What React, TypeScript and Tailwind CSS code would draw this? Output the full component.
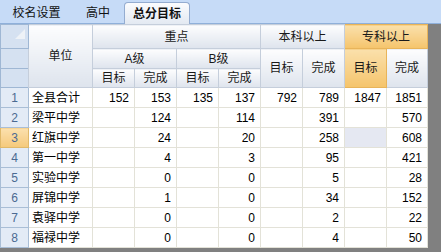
import React from 'react';

type Row = [string, string, string, string, string, string, string, string, string];

const rows: Row[] = [
  ['全县合计', '152', '153', '135', '137', '792', '789', '1847', '1851'],
  ['梁平中学', '', '124', '', '114', '', '391', '', '570'],
  ['红旗中学', '', '24', '', '20', '', '258', '', '608'],
  ['第一中学', '', '4', '', '3', '', '95', '', '421'],
  ['实验中学', '', '0', '', '0', '', '5', '', '28'],
  ['屏锦中学', '', '1', '', '0', '', '34', '', '152'],
  ['袁驿中学', '', '0', '', '0', '', '2', '', '22'],
  ['福禄中学', '', '0', '', '0', '', '4', '', '50'],
];

const font = { fontFamily: '"Liberation Sans", "Noto Sans CJK SC", sans-serif' };

const hd =
  'border border-[#c5cedb] bg-gradient-to-b from-[#fdfdfe] to-[#dee4ed] text-center font-normal text-[12px] text-[#1a1a1a] p-0';
const hdOrange =
  'border border-[#e8b45a] bg-gradient-to-b from-[#fae0ab] to-[#f5c46b] text-center font-normal text-[12px] text-[#1a1a1a] p-0';
const corner = 'border border-[#9fb7d4] bg-[#d5e1f1] p-0';

const App = () => {
  return (
    <div className="w-[441px] h-[252px] overflow-hidden flex flex-col bg-[#808080]" style={font}>
      {/* tab strip */}
      <div className="h-[24px] shrink-0 bg-[#c6dbf7] border-b border-[#8fb0da] flex items-end text-[12px] text-[#111]">
        <div className="w-[72px] h-[21px] flex items-center justify-center pl-[1px]">校名设置</div>
        <div className="w-[52px] h-[21px] flex items-center justify-center">高中</div>
        <div className="w-[66px] h-[22px] -mb-px flex items-center justify-center font-bold rounded-t-[4px] border border-b-0 border-[#94acd0] bg-gradient-to-b from-[#fbfcfe] to-[#e3e9f2]">
          总分目标
        </div>
      </div>

      <table className="table-fixed border-collapse w-[427px] bg-white text-[12px]">
        <colgroup>
          <col className="w-[28px]" />
          <col className="w-[64px]" />
          <col className="w-[42px]" />
          <col className="w-[42px]" />
          <col className="w-[42px]" />
          <col className="w-[42px]" />
          <col className="w-[42px]" />
          <col className="w-[42px]" />
          <col className="w-[42px]" />
          <col className="w-[41px]" />
        </colgroup>
        <thead>
          <tr className="h-[24px]">
            <th className={corner + ' relative bg-[#bfd2ec]'}>
              <svg className="absolute right-[3px] top-[4px]" width="10" height="10" viewBox="0 0 10 10">
                <polygon points="10,0 10,10 0,10" fill="#eef2f7" />
              </svg>
            </th>
            <th rowSpan={3} className={hd}>单位</th>
            <th colSpan={4} className={hd}>重点</th>
            <th colSpan={2} className={hd}>本科以上</th>
            <th colSpan={2} className={hdOrange}>专科以上</th>
          </tr>
          <tr className="h-[20px]">
            <th className={corner} />
            <th colSpan={2} className={hd + ' text-[11px]'}>A级</th>
            <th colSpan={2} className={hd + ' text-[11px]'}>B级</th>
            <th rowSpan={2} className={hd}>目标</th>
            <th rowSpan={2} className={hd}>完成</th>
            <th rowSpan={2} className={hdOrange}>目标</th>
            <th rowSpan={2} className={hd}>完成</th>
          </tr>
          <tr className="h-[19px]">
            <th className={corner} />
            <th className={hd}>目标</th>
            <th className={hd}>完成</th>
            <th className={hd}>目标</th>
            <th className={hd}>完成</th>
          </tr>
        </thead>
        <tbody>
          {rows.map((r, i) => (
            <tr key={i} className="h-[20px]">
              <td
                className={
                  i === 2
                    ? 'border border-[#e0b96a] bg-gradient-to-b from-[#fbe0ad] to-[#f5c97a] text-center text-[#4b6a92] p-0'
                    : 'border border-[#a9bed6] bg-[#e3ebf6] text-center text-[#4b6a92] p-0'
                }
              >
                {i + 1}
              </td>
              <td className="border border-[#e3e2d8] px-[3px] text-left text-black">{r[0]}</td>
              {r.slice(1).map((v, j) => (
                <td
                  key={j}
                  className={
                    'border border-[#e3e2d8] text-right pr-[5px] pl-0 text-black ' +
                    (i === 2 && j === 6 ? 'bg-[#e5e8f2]' : '')
                  }
                >
                  {v}
                </td>
              ))}
            </tr>
          ))}
        </tbody>
      </table>
    </div>
  );
};

export default App;
